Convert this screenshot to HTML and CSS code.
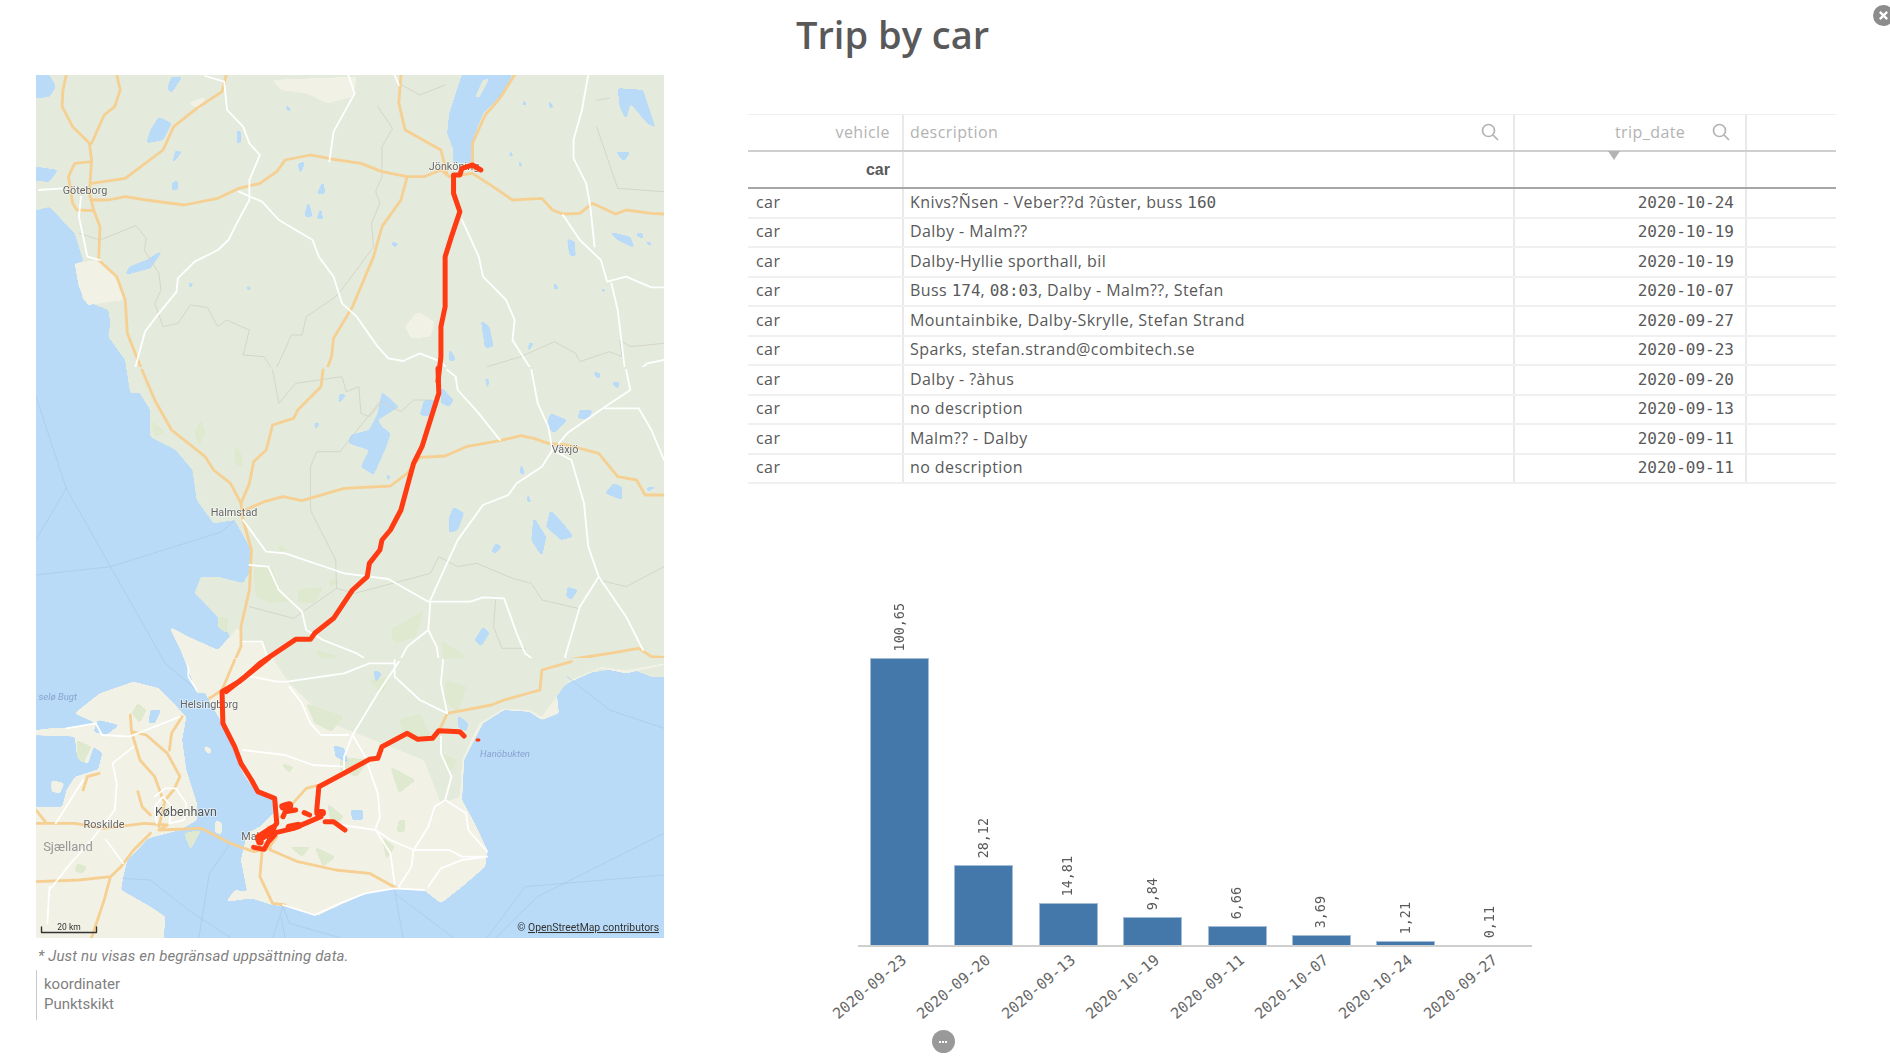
FILE: index.html
```html
<!DOCTYPE html>
<html lang="en">
<head>
<meta charset="utf-8">
<title>Trip by car</title>
<link rel="stylesheet" href="styles.css">
</head>
<body>
<div class="page">
  <section class="left">
    <svg class="map" viewBox="36 75 628 863" width="628" height="863" xmlns="http://www.w3.org/2000/svg">
      <defs>
        <filter id="soft" x="-5%" y="-5%" width="110%" height="110%" color-interpolation-filters="sRGB">
          <feGaussianBlur stdDeviation="3.4 2.8"/>
          <feComponentTransfer><feFuncA type="linear" slope="14" intercept="-6"/></feComponentTransfer>
        </filter>
      </defs>
      <rect class="water" x="36" y="75" width="628" height="863"/>
      <!-- north -->
      <g transform="translate(20 60) scale(.42092 .33333)">
        <path class="land soft" d="M10,0L1600,0L1600,1000L262,1000L250,900L210,830L215,790L210,750L150,720L135,640L150,600L130,520L100,480L70,440L10,460Z"/>
        <path class="pale soft" d="M130,610L185,600L235,660L245,720L160,735L140,680ZM600,60L800,50L790,110L730,130L680,100L620,90ZM915,800L945,755L985,785L975,830L930,835ZM400,130L440,110L430,150Z"/>
        <path class="water soft" d="M10,45L70,45L85,80L70,110L10,120ZM10,315L90,330L70,365L10,360ZM1050,45L1170,45L1140,110L1100,160L1075,240L1070,310L1030,310L1030,270L1015,220L1020,160ZM330,170L360,190L340,240L300,250L310,210ZM360,50L385,50L360,100L350,85ZM300,600L340,570L310,625L250,645L260,620ZM685,420L695,470L675,470ZM715,440L720,480L705,475ZM660,310L678,305L665,345ZM720,360L725,400L705,405ZM1095,780L1115,800L1125,860L1105,865ZM1300,535L1318,545L1320,590L1305,585ZM1400,515L1450,530L1460,565L1420,540ZM1460,520L1480,520L1480,540ZM1420,85L1480,90L1510,205L1490,190L1450,130L1440,180L1425,140ZM1415,275L1450,275L1435,305ZM515,210L525,215L525,250L515,250ZM360,370L375,360L375,390L362,392ZM400,670L412,665L405,690ZM1210,845L1220,850L1205,885ZM1020,860L1035,900L1020,905ZM990,915L1000,930L990,960ZM630,130L645,150L635,155ZM1255,110L1268,145L1258,145ZM1195,115L1205,135L1195,138ZM1185,295L1195,320L1185,320ZM1165,265L1172,290L1162,290ZM880,545L900,550L890,565ZM1270,660L1280,690L1268,688ZM1385,680L1392,695L1380,695ZM370,270L385,275L360,315ZM545,675L550,690L535,688ZM1490,540L1505,555L1490,555Z"/>
        <path class="land soft" d="M1100,60L1115,55L1090,115L1082,110Z"/>
        <g class="bd">
          <path d="M140,520L190,540L275,497L300,535L295,570L330,640L335,690L320,730L340,800L375,790L405,735L445,742L470,800L490,780L545,810L530,885L580,890L600,930"/>
          <path d="M900,70L950,105L1010,75M850,140L885,205L860,260L860,350L845,395L855,430L835,490L840,560L770,680L750,710L680,770L670,825L645,825L600,950"/>
          <path d="M1190,890L1110,920M1190,890L1270,845L1320,880L1330,905L1400,875L1430,890L1425,840L1450,860L1530,850M1370,120L1400,115M1370,200L1420,385L1530,395"/>
        </g>
        <g class="ow">
          <path d="M110,45L102,90L100,140L125,200L165,250L170,300L165,400L175,450L190,500L187,600L230,650L250,720L255,820L280,900L300,960"/>
          <path d="M230,45L238,90L225,140L200,165L170,250M170,370L250,355L340,270L365,200L420,145L480,95L490,45"/>
          <path d="M170,420L210,420L250,410L300,420L390,435L470,415L520,385L570,370L610,335L630,300L690,285L740,297L810,310L860,335L920,350L960,350L1000,330L1020,350L1075,340L1130,385L1170,420L1240,415L1265,450L1290,462L1330,460L1360,430L1415,462L1440,450L1500,460L1530,462"/>
          <path d="M170,305L130,310L115,350L125,430L135,450L175,452M1175,45L1140,115L1105,165L1075,250L1075,330M905,45L900,130L915,210L1000,270L1015,345"/>
          <path d="M920,350L905,420L860,500L840,590L820,650L790,740L745,835L740,890L720,960"/>
        </g>
        <g class="wh">
          <path d="M440,48L485,65L492,150L530,200L545,250L570,285L545,360L545,420L515,490L495,540L470,570L415,605L375,655L372,695L330,760L297,815L270,940"/>
          <path d="M780,45L795,100L745,215L735,305M890,45L900,75M520,395L575,425L615,480L695,540L710,590L745,650L765,730L800,770L850,860L875,895L910,903L950,880L1000,905L1035,955"/>
          <path d="M1350,45L1335,150L1315,240L1315,295L1345,370L1355,440L1365,560M1290,465L1330,540L1380,600L1395,665L1440,650L1500,682L1530,682M1405,670L1420,750L1440,960"/>
          <path d="M1050,480L1090,590L1100,650L1155,720L1175,780L1170,840L1220,940M45,390L100,385M145,410L140,470L160,590L190,600M1530,900L1490,910L1445,960"/>
        </g>
      </g>
      <!-- middle -->
      <g transform="translate(20 370) scale(.42092 .33333)">
        <path class="land soft" d="M250,-10L1600,-10L1600,920L1500,920L1440,890L1370,905L1300,900L1240,905L1225,970L420,970L400,900L385,850L355,770L400,800L470,840L500,800L470,740L415,670L430,620L470,620L530,640L545,610L550,540L510,450L460,460L420,390L410,300L370,240L310,200L310,120L270,40Z"/>
        <path class="pale soft" d="M355,770L400,800L470,840L520,770L525,820L575,820L600,880L620,970L420,970L400,900L385,850Z"/>
        <path class="patch soft" d="M555,590L600,590L615,660L650,690L600,700L560,680ZM310,150L345,185L320,200ZM430,145L440,190L425,230L415,190ZM510,220L525,250L530,295L510,280ZM470,740L495,745L490,790L470,770ZM620,520L640,545L610,540ZM660,660L720,650L700,700L660,700ZM880,780L960,720L940,800L890,820ZM1000,810L1060,860L1010,890ZM1090,880L1170,880L1150,920L1100,920ZM700,840L760,860L720,880ZM740,620L760,640L735,650Z"/>
        <path class="water soft" d="M860,65L900,110L850,150L860,170L880,190L870,230L840,315L810,290L830,240L780,220L785,195L830,180L850,130ZM960,90L985,90L975,140L950,135ZM1000,50L1030,90L1020,110L1000,100ZM1030,410L1055,430L1040,480L1020,490L1020,440ZM1260,130L1300,150L1270,190L1250,170ZM1330,120L1360,120L1350,150L1325,145ZM1410,340L1430,350L1430,390L1390,370ZM1260,420L1290,460L1315,500L1285,510L1250,470ZM1220,440L1250,500L1240,560L1215,510ZM1130,520L1145,530L1130,550L1120,545ZM1300,650L1325,660L1310,690L1298,680ZM1100,770L1115,790L1095,830L1080,810ZM1405,35L1425,35L1420,60ZM1190,270L1200,315L1188,310ZM1205,360L1215,400L1205,395ZM700,155L712,160L700,185ZM760,70L775,75L755,105ZM1105,20L1115,30L1110,70ZM1490,350L1515,350L1490,365ZM870,315L880,315L875,340ZM1360,5L1380,10L1375,30ZM1125,905L1160,935L1120,930ZM840,905L860,925L845,940Z"/>
        <g class="bd">
          <path d="M600,0L615,100L655,40L765,20L775,65L805,50L810,130L830,140L860,95L905,125L935,90L975,90M690,290L705,245L760,245L855,95M690,290L690,420L750,570L752,655L650,745L545,710"/>
          <path d="M752,655L795,670L975,610L995,560L1040,590L1085,580L1170,625L1215,640L1240,690L1325,715M1130,690L1125,770L1145,835L1200,835M1375,630L1440,650L1530,590"/>
        </g>
        <g class="sea">
          <path d="M38,80L110,355L215,590L345,880L420,960M38,510L110,355M38,615L215,590L480,485L510,450"/>
        </g>
        <g class="ow">
          <path d="M290,0L320,90L360,180L440,260L460,300L500,340L525,400L530,450L550,540L545,660L525,770L525,830L500,900L485,960"/>
          <path d="M720,0L715,50L660,120L650,145L600,165L585,240L555,275L545,340L525,400"/>
          <path d="M535,420L580,395L625,380L670,392L770,355L880,348L920,310L950,262L1010,258L1060,230L1140,212L1190,197L1220,205L1255,220L1300,225L1375,250L1420,320L1465,330L1485,375L1530,375M1230,960L1240,890L1300,870L1400,850L1470,835L1500,860L1530,862"/>
        </g>
        <g class="wh">
          <path d="M1015,0L1035,20L1040,60L1090,130L1140,210M1215,0L1230,100L1255,170L1265,240M1265,240L1240,290L1180,340L1160,375L1100,405L1040,510L1000,620L975,690L970,780L990,830L1005,960M970,780L920,830L890,900L925,960"/>
          <path d="M530,450L585,545L630,550L740,597L770,610L875,627L970,695L1070,695L1100,682L1150,685L1180,790L1200,850L1240,890"/>
          <path d="M545,585L590,590L615,660L670,725L680,780L720,810L800,850L835,880L890,880L860,890L780,910L630,935L545,910M530,815L575,815L590,870L610,920L635,935"/>
          <path d="M1265,240L1310,270L1340,400L1350,530L1375,620L1440,740L1480,840M1375,620L1330,710L1295,860L1310,890L1340,870M1440,0L1450,60L1390,110L1300,190L1280,220M1390,115L1470,115L1500,180L1530,270M400,870L400,920L420,960"/>
        </g>
      </g>
      <!-- south -->
      <g transform="translate(20 660) scale(.42092 .33333)">
        <path class="pale soft" d="M10,215L75,205L110,205L180,190L130,160L190,100L270,65L330,85L395,170L385,240L395,330L420,430L420,480L380,510L305,535L255,600L245,650L240,690L310,740L345,770L340,860L10,860Z"/>
        <path class="water soft" d="M10,225L130,230L135,290L180,330L130,350L110,390L100,440L10,440ZM175,260L195,280L185,330L160,320ZM185,180L235,195L205,225L175,215ZM310,150L335,150L320,190L305,190Z"/>
        <path class="pale soft" d="M75,360L105,370L95,400L75,395ZM465,480L480,490L478,525L462,515ZM440,255L455,270L450,285L438,270Z"/>
        <path class="patch soft" d="M135,240L170,260L150,310L135,290ZM135,610L160,620L150,640L130,635ZM390,520L430,510L405,570ZM280,130L300,150L285,190L265,160Z"/>
        <path class="pale soft" d="M390,-5L1600,-5L1530,15L1440,40L1380,25L1300,70L1275,100L1280,160L1240,180L1210,155L1150,150L1100,190L1075,250L1055,300L1050,420L1080,490L1110,570L1105,620L1050,680L1000,730L960,690L890,685L820,700L760,735L705,767L640,740L600,735L550,715L490,725L510,690L540,695L525,600L540,520L570,500L610,450L600,415L560,395L530,340L510,280L480,190L440,100Z"/>
        <path class="land soft" d="M600,-5L1600,-5L1530,10L1440,30L1380,20L1300,65L1240,170L1210,150L1150,145L1090,190L1050,300L1045,410L1000,430L960,300L860,250L760,200L690,130L640,70Z"/>
        <path class="patch soft" d="M680,130L770,170L740,215L700,190ZM760,290L830,300L800,350L760,330ZM730,430L770,470L740,500ZM900,480L915,480L915,515L895,515ZM1000,280L1040,300L1020,340ZM1010,60L1060,80L1040,160L1010,120ZM900,180L950,160L980,240L920,240ZM700,560L750,590L720,620ZM640,560L690,560L670,590ZM860,530L890,560L870,600ZM880,320L940,360L900,400ZM620,310L650,320L640,340ZM830,60L880,50L860,100Z"/>
        <path class="water soft" d="M745,255L770,265L780,310L750,290ZM785,450L815,450L815,480L790,480ZM840,30L860,40L845,70ZM1040,165L1065,190L1060,215L1040,200Z"/>
        <g class="sea">
          <path d="M600,833L625,740L640,790L760,833M620,770L630,833M425,833L450,640L500,550M245,655L310,660L400,750L500,833M890,690L910,833M890,700L1030,833M1110,833L1200,680L1530,645M1130,833L1230,710L1530,520M1300,50L1400,150L1530,205"/>
        </g>
        <g class="ow">
          <path d="M262,165L265,215L300,225L350,280L380,350L365,390L345,420L330,500M265,215L285,300L320,350L340,420M385,170L360,220L355,270"/>
          <path d="M38,490L75,490L130,490L200,505L295,490L350,495L330,510L430,505L500,550L555,575L595,565M595,570L660,605L750,630L830,640L895,685M575,575L570,650L600,730L630,735"/>
          <path d="M310,520L270,570L240,620L215,650L140,660L38,665M215,650L200,720L170,833M38,450L60,485M188,340L160,350L150,390M280,395L290,440L310,465"/>
          <path d="M450,115L480,90L510,0M1015,160L1120,135L1150,120L1235,90L1240,30L1310,5M1015,160L995,215M710,375L680,385L620,470M590,565L610,530L590,500"/>
        </g>
        <g class="wh">
          <path d="M110,205L180,190L195,225L260,230L300,210L380,170M270,260L220,310L230,370L225,450L170,540L120,610M205,540L245,610M70,680L65,790M120,610L70,690M150,360L120,420L85,490"/>
          <path d="M320,410L345,385L370,385L395,430L390,480L355,490L360,440L340,410L320,440L325,490"/>
          <path d="M1005,0L1000,70L1015,160M890,0L890,50L950,120L1015,160M900,5L850,100L790,225L820,290L850,400L855,470L845,505M790,225L770,290L770,330M530,45L610,65L635,65L770,40L830,10L890,10M640,80L670,130L690,190L715,225L780,225"/>
          <path d="M530,270L630,285L695,315L770,320M1000,230L1000,280L1025,350L1010,420L985,440L970,500L935,570L930,620L900,680M1010,420L1060,460L1065,510L1110,575M765,495L845,510L880,540L935,570L1020,570L1050,590L1110,590L1050,600L1000,625L970,680M845,510L880,580L890,670M625,735L700,765L760,730L820,700L890,685L960,690"/>
        </g>
      </g>
      <!-- labels -->
      <g class="lab">
        <text x="454" y="170">Jönköping</text>
        <text x="85" y="194">Göteborg</text>
        <text x="565" y="453">Växjö</text>
        <text x="234" y="516">Halmstad</text>
        <text x="209" y="708">Helsingborg</text>
        <text x="186" y="816" class="lab-big">København</text>
        <text x="104" y="828">Roskilde</text>
        <text x="258" y="840">Malmö</text>
        <text x="68" y="851" class="lab-land">Sjælland</text>
        <text x="505" y="757" class="lab-sea">Hanöbukten</text>
        <text x="77" y="700" class="lab-sea lab-end">selø Bugt</text>
      </g>
      <!-- route -->
      <g transform="translate(20 60) scale(.42092 .33333)" class="route">
        <path d="M1095,330L1075,315L1050,325L1045,345L1030,345L1030,400L1045,455L1025,530L1010,590L1010,740L1000,800L1000,890L993,965"/>
      </g>
      <g transform="translate(20 370) scale(.42092 .33333)" class="route">
        <path d="M993,-5L995,70L975,150L955,230L935,280L920,350L905,420L880,480L860,510L855,540L830,580L825,620L790,660L745,745L700,790L690,808L655,808L570,880L530,925L490,965"/>
      </g>
      <g transform="translate(20 660) scale(.42092 .33333)">
        <g class="route">
          <path d="M590,-5L520,65L480,95L482,190L510,260L525,310L550,360L565,395L605,415L610,490L590,520L565,530"/>
          <path d="M565,540L600,520L650,505L715,470L705,450L710,380L770,340L830,298L850,295L860,260L890,240L920,220L945,238L980,235L995,212L1045,215L1055,228"/>
          <path d="M555,562L580,568L590,545L605,525M725,485L745,485L772,510M625,470L630,455L655,450M675,458L688,465"/>
        </g>
        <g class="route route-thick">
          <path d="M625,440L640,435L640,447M570,545L570,530L600,505M640,502L660,497M708,458L718,458"/>
        </g>
        <ellipse class="route-dot" cx="1088" cy="240" rx="6" ry="5"/>
      </g>
      <!-- scale -->
      <path class="scale" d="M41.5,927V932.5H96.5V927"/>
      <text class="scale-t" x="69" y="930">20 km</text>
      <text class="attr" x="659" y="931">© <tspan class="attr-link">OpenStreetMap contributors</tspan></text>
    </svg>
    <p class="note">* Just nu visas en begränsad uppsättning data.</p>
    <ul class="legend">
      <li>koordinater</li>
      <li>Punktskikt</li>
    </ul>
  </section>

  <section class="right">
    <h1 class="title">Trip by car</h1>
    <div class="table">
      <div class="row head">
        <div class="c c1 hd">vehicle</div>
        <div class="c c2 hd"><span>description</span><svg class="search" viewBox="0 0 18 18"><circle cx="7.5" cy="7.5" r="6"/><path d="M12 12l5 5"/></svg></div>
        <div class="c c3 hd"><span class="dt-h">trip_date</span><svg class="search" viewBox="0 0 18 18"><circle cx="7.5" cy="7.5" r="6"/><path d="M12 12l5 5"/></svg><span class="sort"></span></div>
        <div class="c c4"></div>
      </div>
      <div class="row totals">
        <div class="c c1 tot">car</div>
        <div class="c c2"></div>
        <div class="c c3"></div>
        <div class="c c4"></div>
      </div>
      <div class="row body"><div class="c c1 v">car</div><div class="c c2 d"><span>Knivs?Ñsen - Veber??d ?ûster, buss <span class="n">160</span></span></div><div class="c c3 n">2020-10-24</div><div class="c c4"></div></div>
      <div class="row body"><div class="c c1 v">car</div><div class="c c2 d">Dalby - Malm??</div><div class="c c3 n">2020-10-19</div><div class="c c4"></div></div>
      <div class="row body"><div class="c c1 v">car</div><div class="c c2 d">Dalby-Hyllie sporthall, bil</div><div class="c c3 n">2020-10-19</div><div class="c c4"></div></div>
      <div class="row body"><div class="c c1 v">car</div><div class="c c2 d"><span>Buss <span class="n">174</span>, <span class="n">08:03</span>, Dalby - Malm??, Stefan</span></div><div class="c c3 n">2020-10-07</div><div class="c c4"></div></div>
      <div class="row body"><div class="c c1 v">car</div><div class="c c2 d">Mountainbike, Dalby-Skrylle, Stefan Strand</div><div class="c c3 n">2020-09-27</div><div class="c c4"></div></div>
      <div class="row body"><div class="c c1 v">car</div><div class="c c2 d">Sparks, stefan.strand@combitech.se</div><div class="c c3 n">2020-09-23</div><div class="c c4"></div></div>
      <div class="row body"><div class="c c1 v">car</div><div class="c c2 d">Dalby - ?àhus</div><div class="c c3 n">2020-09-20</div><div class="c c4"></div></div>
      <div class="row body"><div class="c c1 v">car</div><div class="c c2 d">no description</div><div class="c c3 n">2020-09-13</div><div class="c c4"></div></div>
      <div class="row body"><div class="c c1 v">car</div><div class="c c2 d">Malm?? - Dalby</div><div class="c c3 n">2020-09-11</div><div class="c c4"></div></div>
      <div class="row body"><div class="c c1 v">car</div><div class="c c2 d">no description</div><div class="c c3 n">2020-09-11</div><div class="c c4"></div></div>
    </div>
    <div class="chart">
      <div class="plot">
        <div class="col"><div class="stack"><span class="val">100,65</span><div class="bar" style="height:287px"></div></div><span class="cat">2020-09-23</span></div>
        <div class="col"><div class="stack"><span class="val">28,12</span><div class="bar" style="height:80px"></div></div><span class="cat">2020-09-20</span></div>
        <div class="col"><div class="stack"><span class="val">14,81</span><div class="bar" style="height:42px"></div></div><span class="cat">2020-09-13</span></div>
        <div class="col"><div class="stack"><span class="val">9,84</span><div class="bar" style="height:28px"></div></div><span class="cat">2020-10-19</span></div>
        <div class="col"><div class="stack"><span class="val">6,66</span><div class="bar" style="height:19px"></div></div><span class="cat">2020-09-11</span></div>
        <div class="col"><div class="stack"><span class="val">3,69</span><div class="bar" style="height:10px"></div></div><span class="cat">2020-10-07</span></div>
        <div class="col"><div class="stack"><span class="val">1,21</span><div class="bar" style="height:4px"></div></div><span class="cat">2020-10-24</span></div>
        <div class="col"><div class="stack"><span class="val">0,11</span><div class="bar bar-min" style="height:0"></div></div><span class="cat">2020-09-27</span></div>
      </div>
      <div class="more"><span></span><span></span><span></span></div>
    </div>
  </section>

  <button class="close" aria-label="Close">
    <svg viewBox="0 0 20 20"><path d="M6.5 6.5l7 7M13.5 6.5l-7 7"/></svg>
  </button>
</div>
</body>
</html>
```

FILE: styles.css
```css
html, body { margin: 0; padding: 0; background: #fff; }
.page {
  position: relative;
  width: 1890px;
  height: 1057px;
  overflow: hidden;
  display: grid;
  grid-template-columns: 748px 1088px;
  font-family: "Open Sans", "Noto Sans", sans-serif;
  color: #595959;
}

/* left column */
.left { padding: 75px 0 0 36px; }
.map { display: block; filter: blur(.45px); }
.soft { filter: url(#soft); }
.water { fill: #b9dbf8; }
.land { fill: #e4ebdc; }
.pale { fill: #f1f1e5; }
.patch { fill: #dfe9cf; }
.ow path, .wh path, .bd path, .sea path, .route path, .scale {
  fill: none;
  stroke-linejoin: round;
  stroke-linecap: round;
  vector-effect: non-scaling-stroke;
}
.ow path { stroke: #f6cf92; stroke-width: 2.8; }
.wh path { stroke: #fff; stroke-width: 1.8; }
.bd path { stroke: #d2cfc4; stroke-width: .8; }
.sea path { stroke: #a8c9e8; stroke-width: .7; }
.route path { stroke: #ff3b14; stroke-width: 5; }
.route-thick path { stroke-width: 7.5; }
.route-dot { fill: #ff3b14; }
.lab text {
  font-family: "Roboto", sans-serif;
  font-size: 10.8px;
  fill: #666;
  text-anchor: middle;
  stroke: #fff;
  stroke-width: 1.5px;
  stroke-opacity: .55;
  paint-order: stroke;
}
.lab .lab-big { font-size: 12.5px; fill: #555; }
.lab .lab-land { font-size: 13px; fill: #999; stroke: none; }
.lab .lab-sea { font-style: italic; fill: #88a3d0; stroke: none; font-size: 9.5px; }
.lab .lab-end { text-anchor: end; }
.scale { stroke: #333; stroke-width: 1.4; }
.scale-t { font-family: "Roboto", sans-serif; font-size: 8.5px; fill: #333; text-anchor: middle; }
.attr { font-family: "Roboto", sans-serif; font-size: 10.4px; fill: #333; text-anchor: end; }
.attr-link { text-decoration: underline; }

.note {
  margin: 9px 0 0 2px;
  font-family: "Roboto", sans-serif;
  font-style: italic;
  font-size: 15px;
  letter-spacing: .15px;
  line-height: 18px;
  color: #808080;
}
.legend {
  list-style: none;
  margin: 5px 0 0;
  padding: 4px 0 6px 7px;
  width: 200px;
  border-left: 1px solid #c8c8c8;
  font-family: "Roboto", sans-serif;
  font-size: 15px;
  line-height: 20px;
  color: #808080;
}

/* right column */
.right { display: flex; flex-direction: column; }
.title {
  margin: 0;
  height: 114px;
  box-sizing: border-box;
  padding: 9px 0 0 48px;
  font-size: 38px;
  line-height: 50px;
  font-weight: 600;
  color: #595959;
}
.table {
  border-top: 1px solid #efefef;
  font-size: 16px;
  letter-spacing: .42px;
}
.row { display: flex; box-sizing: border-box; }
.c { position: relative; box-sizing: border-box; border-right: 2px solid #e9e9e9; display: flex; align-items: center; white-space: nowrap; }
.c1 { width: 156px; padding: 0 12px 0 8px; }
.c2 { width: 611px; padding: 0 6px; }
.c3 { width: 232px; padding-right: 11px; justify-content: flex-end; }
.c4 { flex: 1; border-right: 0; }
.head { height: 37px; border-bottom: 2px solid #cfcfcf; }
.head .c { padding-bottom: 2px; }
.hd { color: #b3b3b3; }
.head .c1, .totals .c1 { justify-content: flex-end; }
.head .c2 { justify-content: space-between; padding-right: 14px; }
.head .c3 { justify-content: flex-start; padding-left: 100px; padding-right: 0; }
.search { width: 18px; height: 18px; flex: none; fill: none; stroke: #b3b3b3; stroke-width: 1.7; }
.dt-h { width: 97px; }
.sort {
  position: absolute;
  left: 93px;
  bottom: -10px;
  border: 6.5px solid transparent;
  border-top: 9px solid #b3b3b3;
  border-bottom: 0;
}
.totals { height: 37px; border-bottom: 2px solid #a6a6a6; }
.tot { font-family: "Liberation Sans", sans-serif; font-weight: 700; font-size: 16px; letter-spacing: 0; }
.body { height: 29.5px; border-bottom: 2px solid #f0f0f0; }
.body .v, .body .d { padding-bottom: 2px; }
.body .c3 { padding-bottom: 1px; }
.n { font-family: "DejaVu Sans Mono", monospace; font-size: 16px; letter-spacing: 0; }

/* chart */
.chart { position: relative; flex: 1; }
.plot {
  position: absolute;
  left: 110px;
  top: 461px;
  width: 674px;
  height: 0;
  border-top: 2px solid #cfcfcf;
  display: flex;
  padding-left: 12px;
  box-sizing: border-box;
}
.col {
  position: relative;
  flex: none;
  width: 84.4px;
  height: 0;
}
.stack {
  position: absolute;
  left: 0;
  bottom: 2px;
  width: 59px;
  display: flex;
  flex-direction: column;
  align-items: center;
  gap: 7px;
}
.bar {
  width: 59px;
  box-sizing: border-box;
  background: #4477aa;
  border: 1px solid #a3bdd6;
  border-bottom: 0;
}
.bar-min { border: 0; }
.val {
  font-family: "DejaVu Sans Mono", monospace;
  font-size: 13.4px;
  line-height: 16px;
  white-space: nowrap;
  color: #595959;
  writing-mode: vertical-rl;
  transform: rotate(180deg);
}
.cat {
  position: absolute;
  right: 56px;
  top: 4px;
  font-family: "DejaVu Sans Mono", monospace;
  font-size: 15px;
  line-height: 18px;
  white-space: nowrap;
  color: #666;
  transform-origin: 100% 0;
  transform: rotate(-40deg);
}
.more {
  position: absolute;
  left: 183.5px;
  top: 546px;
  width: 23px;
  height: 23px;
  border-radius: 50%;
  background: #999;
  display: flex;
  align-items: center;
  justify-content: center;
  gap: 1px;
}
.more span { width: 2px; height: 2px; background: #fff; }

.close {
  position: absolute;
  left: 1873px;
  top: 5px;
  width: 21px;
  height: 21px;
  padding: 0;
  border: 0;
  border-radius: 50%;
  background: #8c8c8c;
}
.close svg { display: block; width: 21px; height: 21px; fill: none; stroke: #fff; stroke-width: 2.2; }
```
